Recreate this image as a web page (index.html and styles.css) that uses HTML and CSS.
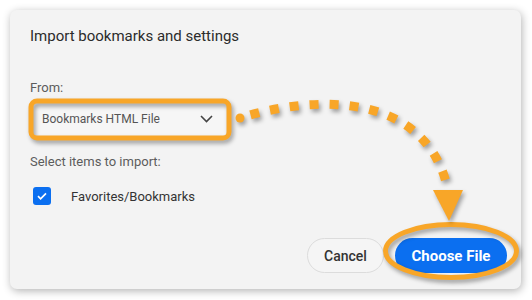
FILE: index.html
```html
<!DOCTYPE html>
<html lang="en">
<head>
    <meta charset="UTF-8">
    <meta name="viewport" content="width=device-width, initial-scale=1.0">
    <title>Import bookmarks and settings</title>
    <link rel="stylesheet" href="styles.css">
</head>
<body>
    <div class="dialog">
        <h1 class="title">Import bookmarks and settings</h1>

        <label class="field-label">From:</label>
        <div class="select">
            <span>Bookmarks HTML File</span>
            <svg class="chevron" width="13" height="8" viewBox="0 0 13 8">
                <path d="M1 1l5.5 5.5L12 1" fill="none" stroke="#444" stroke-width="1.6"/>
            </svg>
        </div>

        <label class="field-label items-label">Select items to import:</label>
        <div class="check-row">
            <span class="checkbox">
                <svg width="12" height="10" viewBox="0 0 12 10">
                    <path d="M2 5.2l2.6 2.6L10 2.4" fill="none" stroke="#fff" stroke-width="1.7"/>
                </svg>
            </span>
            <span class="check-text">Favorites/Bookmarks</span>
        </div>

        <div class="button-group">
            <button class="btn btn-cancel">Cancel</button>
            <button class="btn btn-primary">Choose File</button>
        </div>
    </div>

    <!-- annotation drawn over the dialog -->
    <svg class="annotation" width="532" height="300" viewBox="0 0 532 300">
        <g class="marks" fill="none" stroke="#f8a628">
            <rect x="31" y="101" width="198" height="37" rx="6" stroke-width="5"/>
            <circle cx="240" cy="118" r="4.5" fill="#f8a628" stroke="none"/>
            <path d="M240 118C310 96 420 90 446 182" stroke-width="9" stroke-dasharray="9 11" stroke-dashoffset="9"/>
            <ellipse cx="451" cy="251" rx="65.5" ry="26.5" stroke-width="5"/>
        </g>
        <polygon class="marks" points="433,190 463,190 449,221" fill="#f8a628"/>
    </svg>
</body>
</html>
```

FILE: styles.css
```css
* {
    box-sizing: border-box;
    margin: 0;
    padding: 0;
    font-family: Roboto, "Liberation Sans", sans-serif;
}

body {
    background-color: #fff;
    width: 532px;
    height: 300px;
    overflow: hidden;
    position: relative;
}

.dialog {
    position: relative;
    margin: 10px 0 0 10px;
    width: 511px;
    height: 279px;
    background-color: #f3f3f3;
    border-radius: 7px;
    box-shadow: 1px 2px 8px rgba(0, 0, 0, 0.3);
    padding: 16px 14px 16px 20px;
    display: flex;
    flex-direction: column;
    align-items: flex-start;
}

.title {
    font-size: 15px;
    font-weight: 400;
    line-height: 20px;
    color: #2b2b2b;
}

.field-label {
    display: block;
    margin-top: 34px;
    font-size: 13px;
    line-height: 16px;
    color: #5c5c5c;
}

.items-label {
    margin-top: 17px;
}

.select {
    margin-top: 5px;
    margin-left: 1px;
    width: 198px;
    height: 36px;
    border: 1px solid #cfcfcf;
    border-radius: 4px;
    background-color: #f6f6f6;
    display: flex;
    align-items: center;
    justify-content: space-between;
    padding: 0 15px 0 10px;
    font-size: 12px;
    color: #555;
}

.check-row {
    margin-top: 17px;
    display: flex;
    align-items: center;
    height: 18px;
}

.checkbox {
    width: 18px;
    height: 18px;
    margin-left: 3px;
    border-radius: 3px;
    background-color: #0b6ff0;
    display: flex;
    align-items: center;
    justify-content: center;
}

.check-text {
    margin-left: 20px;
    font-size: 13px;
    color: #333;
}

.button-group {
    margin-top: auto;
    align-self: flex-end;
    display: flex;
    gap: 11px;
}

.btn {
    height: 35px;
    border-radius: 18px;
    font-size: 14px;
    font-weight: 700;
    cursor: pointer;
}

.btn-cancel {
    width: 77px;
    border: 1px solid #dcdcdc;
    background-color: #f5f5f5;
    color: #333;
    font-weight: 500;
}

.btn-primary {
    width: 112px;
    border: none;
    background-color: #0b6ff0;
    color: #fff;
    font-size: 15px;
}

.annotation {
    position: absolute;
    left: 0;
    top: 0;
    pointer-events: none;
}

.marks {
    filter: drop-shadow(2px 3px 2px rgba(0, 0, 0, 0.35));
}
```
